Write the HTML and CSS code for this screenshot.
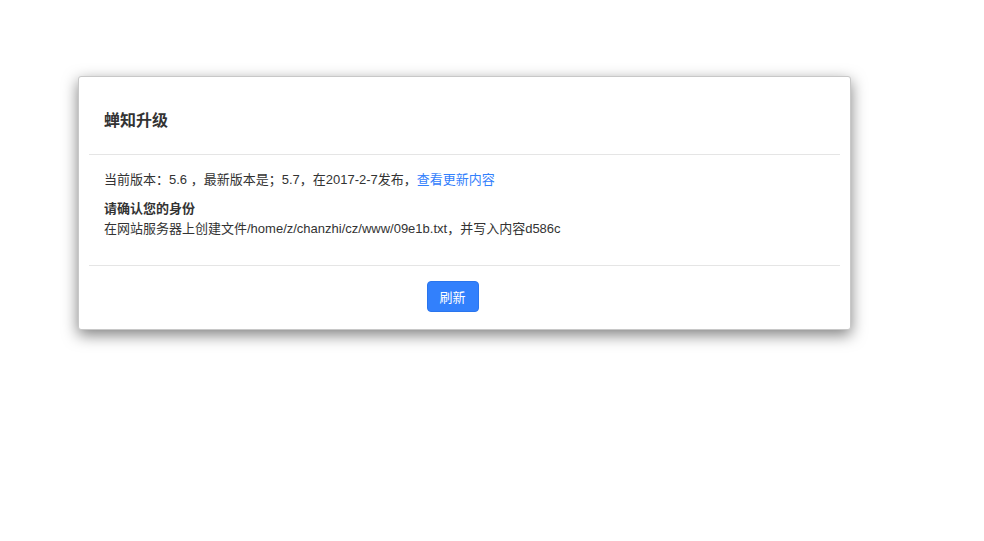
FILE: index.html
```html
<!DOCTYPE html>
<html lang="zh-CN">
<head>
    <meta charset="UTF-8">
    <meta name="viewport" content="width=device-width, initial-scale=1.0">
    <title>蝉知升级</title>
    <link rel="stylesheet" href="styles.css">
</head>
<body>
    <div class="modal">
        <div class="modal-header">
            <h4 class="modal-title">蝉知升级</h4>
        </div>
        <div class="modal-body">
            <p class="version">当前版本：5.6 ，最新版本是；5.7，在2017-2-7发布，<a href="#">查看更新内容</a></p>
            <strong>请确认您的身份</strong>
            <p>在网站服务器上创建文件/home/z/chanzhi/cz/www/09e1b.txt，并写入内容d586c</p>
        </div>
        <div class="modal-footer">
            <button class="btn">刷新</button>
        </div>
    </div>
</body>
</html>
```

FILE: styles.css
```css
body {
    margin: 0;
    padding-top: 76px;
    min-height: 100vh;
    box-sizing: border-box;
    background: #fff;
    font-family: "Liberation Sans", "Noto Sans CJK SC", sans-serif;
    font-size: 13px;
    line-height: 20px;
    color: #333;
}

.modal {
    width: 771px;
    margin-left: 78px;
    background: #fff;
    border: 1px solid #c8c8c8;
    border-radius: 3px;
    box-shadow: 0 5px 15px rgba(0,0,0,0.5);
}

.modal-header {
    margin: 0 10px;
    padding: 33px 15px 22px;
    border-bottom: 1px solid #e5e5e5;
}
.modal-title {
    margin: 0;
    font-size: 16px;
    line-height: 22px;
    font-weight: bold;
}

.modal-body {
    padding: 15px 25px 26px;
}
.modal-body p {
    margin: 0;
}
.modal-body .version {
    margin-bottom: 9px;
}
.modal-body strong {
    display: block;
}
.modal-body a {
    color: #3280fc;
    text-decoration: none;
}

.modal-footer {
    margin: 0 10px;
    padding: 15px 24px 17px 0;
    border-top: 1px solid #e5e5e5;
    text-align: center;
}
.btn {
    width: 52px;
    height: 31px;
    padding: 0;
    border: 1px solid #2a75ed;
    border-radius: 4px;
    background: #3280fc;
    color: #fff;
    font-family: inherit;
    font-size: 13px;
}
```
